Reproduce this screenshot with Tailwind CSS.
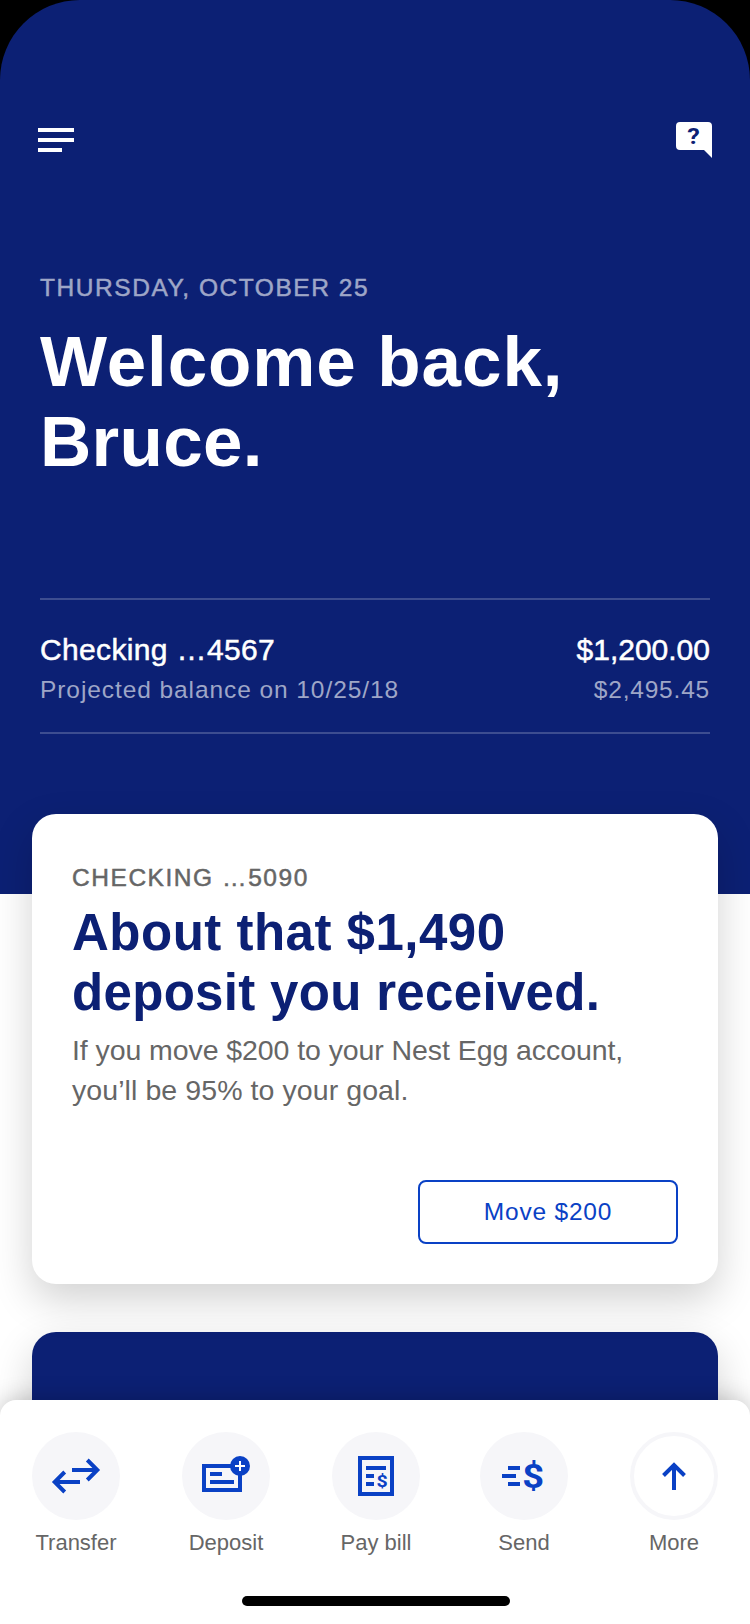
<!DOCTYPE html>
<html lang="en">
<head>
<meta charset="utf-8">
<title>Home</title>
<script src="https://cdn.jsdelivr.net/npm/@tailwindcss/browser@4"></script>
</head>
<body class="bg-black font-['Liberation_Sans',Arial,sans-serif]">
<div class="relative flex h-[1624px] w-[750px] flex-col overflow-hidden rounded-t-[80px] bg-[linear-gradient(#0c2074_894px,#fff_894px)]">
  <header class="flex h-[894px] shrink-0 flex-col px-10 text-white">
    <div class="-mx-0.5 mt-[122px] flex h-9 items-center justify-between">
      <svg class="h-9 w-9" viewBox="0 0 36 36" fill="#fff" role="img" aria-label="Menu"><path d="M0 6h36v4H0zM0 16h36v4H0zM0 26h24v4H0z"/></svg>
      <svg class="h-9 w-9" viewBox="0 0 36 36" role="img" aria-label="Help"><path d="M4 0h28a4 4 0 0 1 4 4v32l-8-8H4a4 4 0 0 1-4-4V4a4 4 0 0 1 4-4z" fill="#fff"/><text transform="translate(17.5 22) scale(1.12 1)" text-anchor="middle" font-family="Roboto, sans-serif" font-weight="700" font-size="22.5" fill="#0c2074">?</text></svg>
    </div>
    <p class="mt-[114px] text-[24.5px] leading-8 tracking-[1.55px] text-[#9ea6c7] [-webkit-text-stroke:0.5px]">THURSDAY, OCTOBER 25</p>
    <h1 class="mt-[18px] text-[71px] leading-[80px] font-bold"><span class="tracking-[0.9px]">Welcome back,</span><br><span class="tracking-[0.3px]">Bruce.</span></h1>
    <section class="mt-[116px] h-[136px] border-y-2 border-[#3d4d90] pt-[30px]">
      <div class="flex justify-between text-[30px] leading-10 [-webkit-text-stroke:0.5px]"><span class="tracking-[0.35px]">Checking …4567</span><span>$1,200.00</span></div>
      <div class="flex justify-between text-[24.5px] leading-10 tracking-[0.92px] text-[#9ea6c7]"><span>Projected balance on 10/25/18</span><span class="tracking-[0.8px]">$2,495.45</span></div>
    </section>
  </header>

  <main class="-mt-20 flex shrink-0 flex-col gap-12 px-8">
    <article class="relative flex h-[470px] flex-col rounded-3xl bg-white px-10 pt-12 shadow-[0_16px_40px_rgba(0,0,0,0.18)]">
      <p class="text-[24.5px] leading-8 tracking-[1.55px] text-[#666] [-webkit-text-stroke:0.5px]">CHECKING …5090</p>
      <h2 class="mt-[9px] text-[51px] leading-[60px] font-bold text-[#0c2074]"><span class="tracking-[0.5px]">About that $1,490</span><br><span class="tracking-[0.32px]">deposit you received.</span></h2>
      <p class="mt-[7px] text-[28.5px] leading-10 text-[#666]"><span class="tracking-[-0.08px]">If you move $200 to your Nest Egg account,</span><br><span class="tracking-[0.08px]">you’ll be 95% to your goal.</span></p>
      <button class="mt-[70px] h-16 w-[260px] self-end rounded-lg border-2 border-[#0a41c5] text-[24.5px] leading-[60px] tracking-[0.8px] text-[#0a41c5]">Move $200</button>
    </article>
    <article class="h-[292px] rounded-3xl bg-[#0c2074] shadow-[0_16px_40px_rgba(0,0,0,0.18)]"></article>
  </main>

  <nav class="absolute inset-x-0 bottom-0 flex h-[224px] flex-col items-center rounded-t-2xl bg-white pt-8 shadow-[0_0_24px_rgba(0,0,0,0.24)]">
    <ul class="flex w-full justify-between px-8 text-center text-[22px] leading-7 text-[#666]">
      <li class="flex w-[88px] flex-col items-center gap-[9px]">
        <svg class="h-[88px] w-[88px] rounded-full bg-[#f6f6f9]" viewBox="0 0 88 88" fill="none" stroke="#0a41c5" stroke-width="4"><path d="M40 38h25M55.300 28L65.300 38L55.300 48M48 50H23M32.700 40L22.700 50L32.700 60"/></svg>
        <span>Transfer</span>
      </li>
      <li class="flex w-[88px] flex-col items-center gap-[9px]">
        <svg class="h-[88px] w-[88px] rounded-full bg-[#f6f6f9]" viewBox="0 0 88 88" fill="none" stroke="#0a41c5" stroke-width="4"><path d="M22 34h36v24H22zM28 42h12M28 50h24"/><circle cx="58" cy="34" r="10" fill="#0a41c5" stroke="none"/><path d="M53 34h10M58 29v10" stroke="#fff" stroke-width="2"/></svg>
        <span>Deposit</span>
      </li>
      <li class="flex w-[88px] flex-col items-center gap-[9px]">
        <svg class="h-[88px] w-[88px] rounded-full bg-[#f6f6f9]" viewBox="0 0 88 88" fill="none" stroke="#0a41c5" stroke-width="4"><path d="M28 26h32v36H28zM34 36h20M34 44h8M34 52h8"/><text transform="translate(50 55) scale(1.15 1)" text-anchor="middle" font-family="Roboto, sans-serif" font-weight="700" font-size="17" fill="#0a41c5" stroke="none">$</text></svg>
        <span>Pay bill</span>
      </li>
      <li class="-ml-0.5 flex w-[88px] flex-col items-center gap-[9px]">
        <svg class="h-[88px] w-[88px] rounded-full bg-[#f6f6f9]" viewBox="0 0 88 88" fill="none" stroke="#0a41c5" stroke-width="4"><path d="M28 36h12M22 44h14M28 52h12"/><text transform="translate(53.2 56) scale(1.12 1)" text-anchor="middle" font-family="Roboto, sans-serif" font-weight="700" font-size="34" fill="#0a41c5" stroke="none">$</text></svg>
        <span>Send</span>
      </li>
      <li class="flex w-[88px] flex-col items-center gap-[9px]">
        <svg class="h-[88px] w-[88px]" viewBox="0 0 88 88" fill="none" stroke="#0a41c5" stroke-width="4"><circle cx="44" cy="44" r="42" stroke="#f6f6f9"/><path d="M44 58V33M33.500 43.500L44 33l10.500 10.500"/></svg>
        <span>More</span>
      </li>
    </ul>
    <div class="mt-[39px] ml-0.5 h-2.5 w-[268px] rounded-full bg-black"></div>
  </nav>
</div>
</body>
</html>
